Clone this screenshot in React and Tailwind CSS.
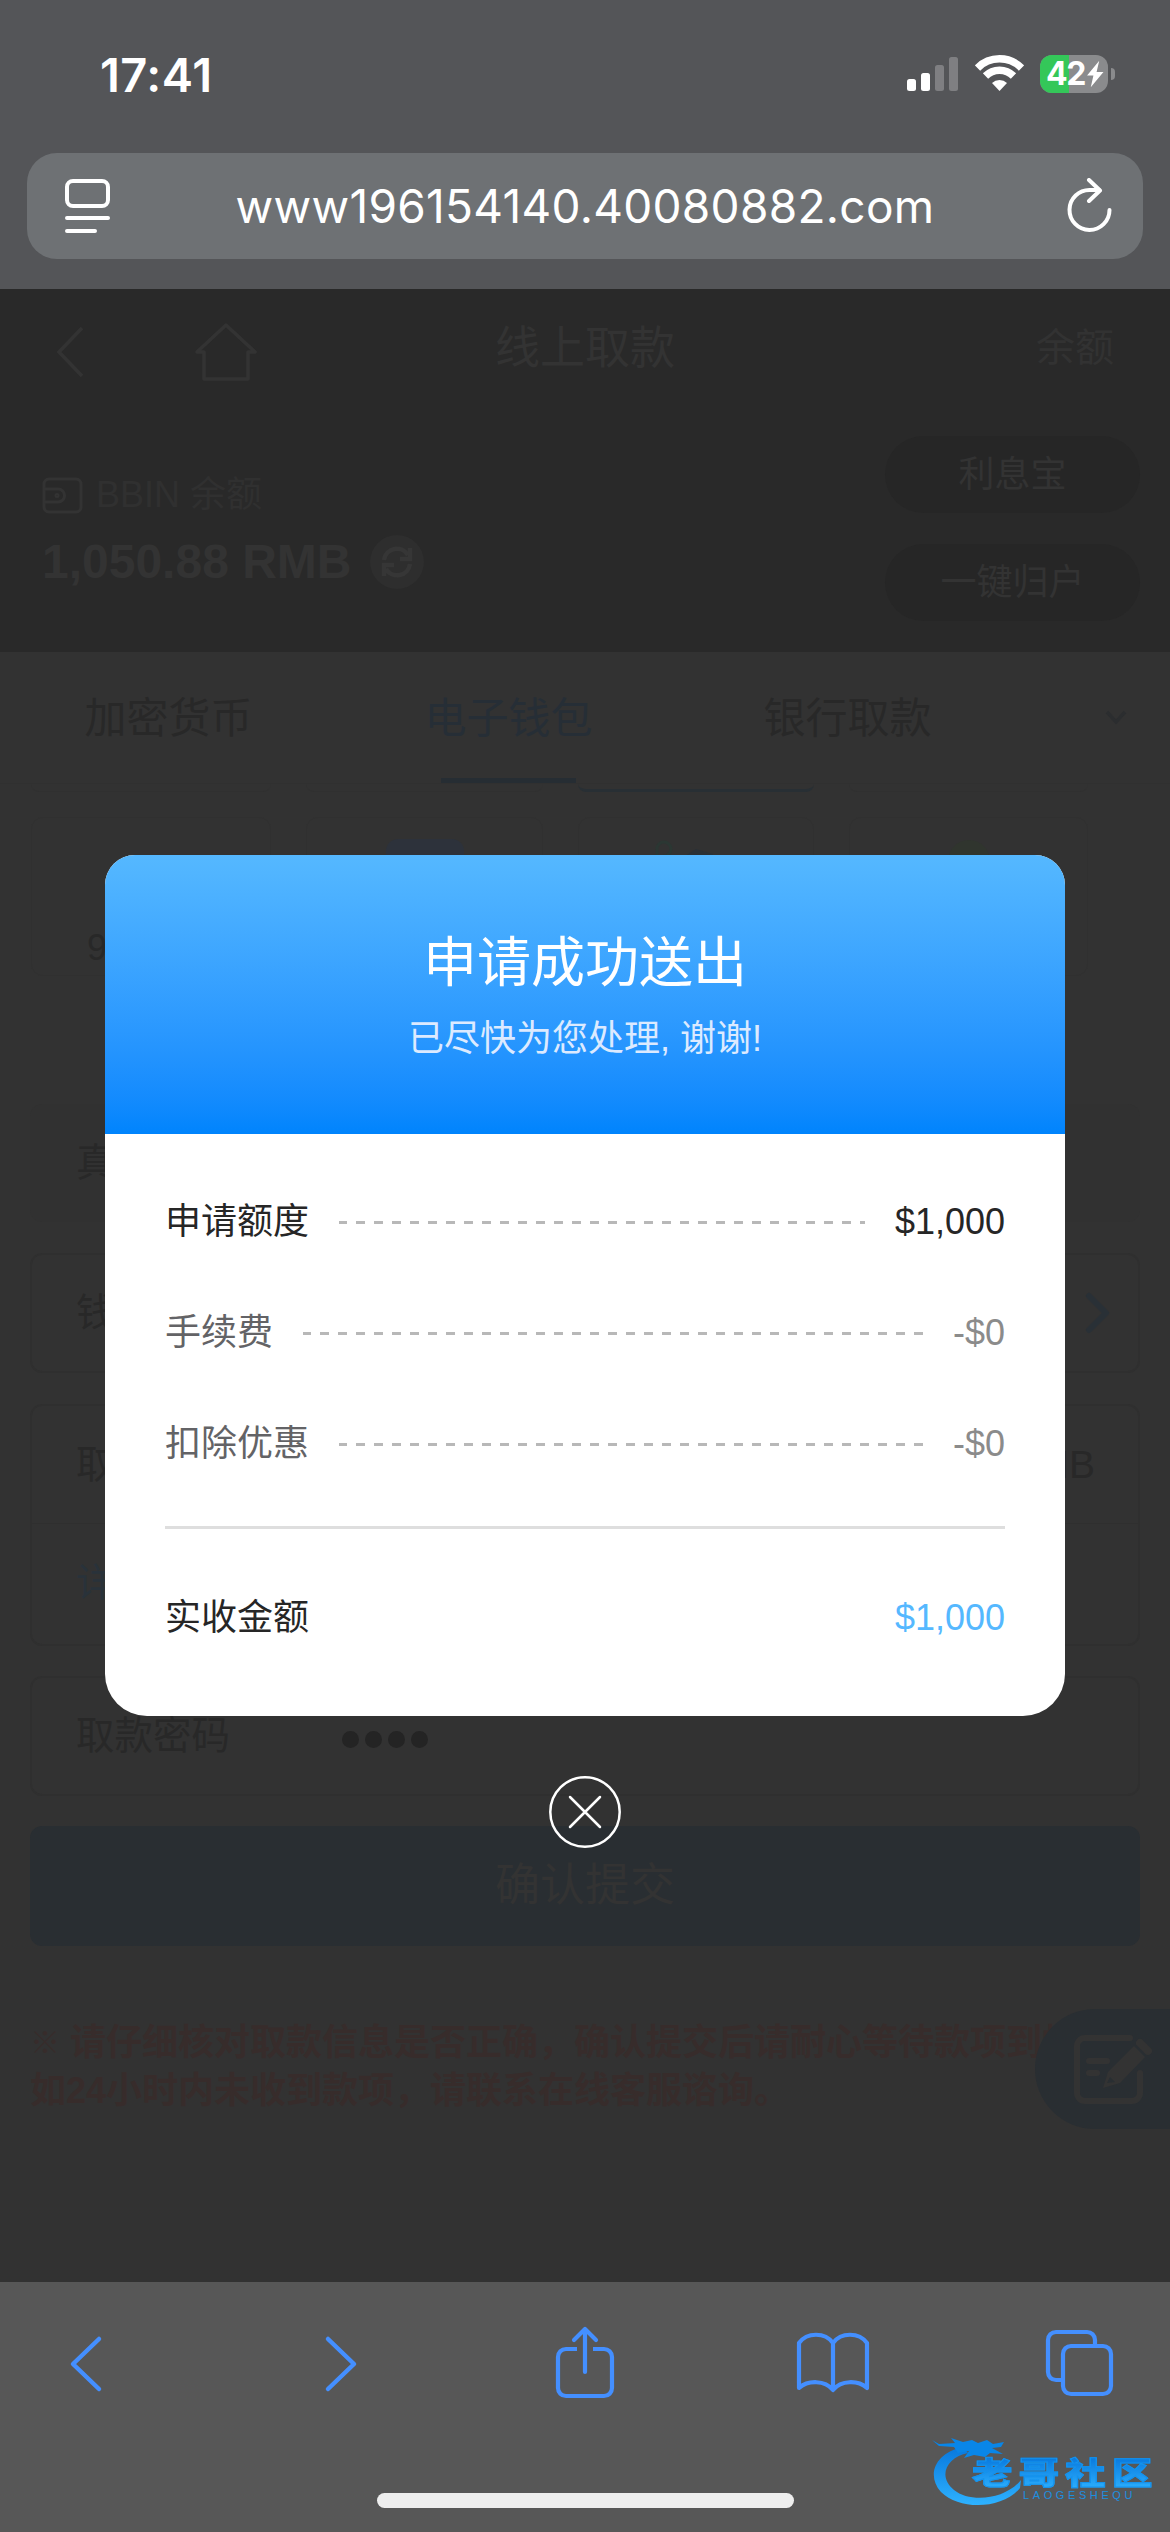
import React from 'react';

const summaryRows = [
  { label: '申请额度', value: '$1,000', labelClass: 'text-[#262626]', valueClass: 'text-[#262626]' },
  { label: '手续费', value: '-$0', labelClass: 'text-[#636366]', valueClass: 'text-[#8b8b8b]' },
  { label: '扣除优惠', value: '-$0', labelClass: 'text-[#636366]', valueClass: 'text-[#8b8b8b]' },
];

const StatusBar = () => (
  <div className="flex h-[153px] items-start justify-between pl-[100px] pr-[55px] pt-[52px] text-white">
    <div className="font-[Inter] text-[47px] font-semibold leading-[46px] tracking-[0.5px]">17:41</div>
    <div className="flex items-start pt-[3px]">
      <svg width="52" height="38" viewBox="0 0 52 38" fill="#fff">
        <rect x="0" y="24" width="9" height="12" rx="2.5" />
        <rect x="14" y="18" width="9" height="18" rx="2.5" />
        <rect x="28" y="10" width="9" height="26" rx="2.5" opacity=".25" />
        <rect x="42" y="2" width="9" height="34" rx="2.5" opacity=".25" />
      </svg>
      <svg className="ml-4" width="49" height="36" viewBox="0 0 49 36" fill="none" stroke="#fff">
        <path d="M2.500 13 a31 31 0 0 1 44 0" strokeWidth="7.500" />
        <path d="M10.500 21 a19.800 19.800 0 0 1 28 0" strokeWidth="7.500" />
        <path d="M24.500 36 l-7.500-8 a11 11 0 0 1 15 0z" fill="#fff" stroke="none" />
      </svg>
      <div className="relative ml-4 flex h-[38px] w-[68px] items-center overflow-hidden rounded-[12px] bg-[#8a8b8d]">
        <div className="h-full w-[29px] bg-[#34c759]" />
        <div className="absolute inset-0 flex items-center pl-[6px] font-[Inter] text-[32px] font-bold leading-none tracking-[-1.5px]">
          42
          <svg className="ml-px" width="18" height="28" viewBox="0 0 17 25" fill="#fff">
            <path d="M12.500 0 L1 14 h6 L4.500 25 L16.500 10.500 h-6.500 z" />
          </svg>
        </div>
      </div>
      <div className="ml-[3px] mt-[13px] h-[12px] w-[4px] rounded-r-full bg-[#8a8b8d]" />
    </div>
  </div>
);

const AddressBar = () => (
  <div className="mx-[27px] flex h-[106px] items-center rounded-[30px] bg-[#6e7174] pl-[37px] pr-[30px]">
    <svg width="46" height="56" viewBox="0 0 46 56" fill="none" stroke="#fff" strokeWidth="4" strokeLinecap="round">
      <rect x="3" y="3" width="41" height="25" rx="6" />
      <path d="M3 40h41M3 53h28" />
    </svg>
    <div className="flex-1 whitespace-nowrap pr-[7px] text-center font-[Inter] text-[46px] leading-[60px] tracking-[0.3px] text-white">www196154140.40080882.com</div>
    <svg width="46" height="56" viewBox="0 0 46 56" fill="none" stroke="#fff" strokeWidth="4" strokeLinecap="round" strokeLinejoin="round">
      <path d="M42.500 32 A20 20 0 1 1 23 12 h9" />
      <path d="M22 2 L33 12.500 L22 23" />
    </svg>
  </div>
);

const PageHeader = () => (
  <div className="flex h-[117px] items-start justify-between px-[56px]">
    <div className="flex w-[240px] items-start pt-[33px]">
      <svg className="mt-[5px]" width="28" height="50" viewBox="0 0 28 50" fill="none" stroke="#333" strokeWidth="3.500">
        <path d="M26 1 L3 25 L26 49" />
      </svg>
      <svg className="ml-[111px]" width="62" height="60" viewBox="0 0 62 60" fill="none" stroke="#333" strokeWidth="3.500" strokeLinejoin="round">
        <path d="M2 30 L31 3 L60 30 H53 V57 H9 V30 Z" />
      </svg>
    </div>
    <div className="pt-[28px] text-[45px] leading-[64px] text-[#333]">线上取款</div>
    <div className="w-[240px] pt-[27px] text-right text-[39px] leading-[64px] text-[#323232]">余额</div>
  </div>
);

const Balance = () => (
  <div className="flex h-[246px] justify-between pl-[42px] pr-[30px]">
    <div className="pt-[64px]">
      <div className="flex h-[50px] items-center text-[36px] text-[#303030]">
        <svg className="mr-[13px]" width="41" height="37" viewBox="0 0 41 37" fill="none" stroke="#333" strokeWidth="3">
          <rect x="2" y="2" width="37" height="33" rx="5" />
          <path d="M2 12h14a6.500 6.500 0 0 1 0 13H2" />
          <circle cx="15" cy="18.500" r="1" />
        </svg>
        BBIN 余额
      </div>
      <div className="mt-[15px] flex h-[54px] items-center text-[48px] font-bold text-[#333]">
        1,050.88 RMB
        <div className="ml-[18px] flex size-[54px] items-center justify-center rounded-full bg-[#2e2e2e]">
          <svg width="32" height="32" viewBox="0 0 32 32" fill="none" stroke="#363636" strokeWidth="4.500">
            <path d="M3 14 A13 13 0 0 1 27 9 M29 2 v11 h-10" />
            <path d="M29 18 A13 13 0 0 1 5 23 M3 30 v-11 h10" />
          </svg>
        </div>
      </div>
    </div>
    <div className="flex w-[255px] flex-col gap-[31px] pt-[30px] text-center text-[36px] leading-[78px] text-[#333]">
      <div className="h-[77px] rounded-full bg-[#262626]">利息宝</div>
      <div className="h-[77px] rounded-full bg-[#262626]">一键归户</div>
    </div>
  </div>
);

const Tabs = () => (
  <div className="flex h-[132px] border-b border-[#303030] text-center text-[42px] leading-[133px] text-[#282828]">
    <div className="w-[337px]">加密货币</div>
    <div className="flex w-[343px] flex-col items-center text-[#262e36]">
      <div className="h-[126px]">电子钱包</div>
      <div className="h-[6px] w-[135px] bg-[#262d33]" />
    </div>
    <div className="w-[335px]">银行取款</div>
    <div className="ml-[47px] flex w-[108px] items-center justify-center">
      <svg width="22" height="16" viewBox="0 0 22 16" fill="none" stroke="#2b2d2f" strokeWidth="3.500">
        <path d="M2 2 L11 12 L20 2" />
      </svg>
    </div>
  </div>
);

const WalletGrid = () => (
  <div className="h-[320px] px-[31px] text-[36px] text-[#282828]">
    <div className="grid h-[8px] grid-cols-[240px_237px_236px_239px] gap-x-[35px]">
      <div className="rounded-b-lg border-b border-[#303030]" />
      <div className="rounded-b-lg border-b border-[#303030]" />
      <div className="rounded-b-lg border-b-3 border-[#282f34]" />
      <div className="rounded-b-lg border-b border-[#303030]" />
    </div>
    <div className="mt-[25px] grid h-[132px] grid-cols-[240px_237px_236px_239px] gap-x-[35px]">
      <div className="rounded-xl border border-[#303030] pl-[55px] pt-[103px] leading-[54px]">988</div>
      <div className="flex justify-center rounded-xl border border-[#303030] pt-[21px]">
        <div className="h-[60px] w-[78px] rounded-xl bg-[#2d323b]" />
      </div>
      <div className="flex justify-center rounded-xl border border-[#303030] pr-[26px] pt-[22px]">
        <svg width="64" height="40" viewBox="0 0 64 40" fill="none">
          <path d="M6 24 V10 a7 7 0 1 1 6 6" stroke="#2b3733" strokeWidth="3" />
          <path d="M34 16 L45 9 L62 14 V40 H34z" fill="#2a3136" />
        </svg>
      </div>
      <div className="flex justify-center rounded-xl border border-[#303030] pt-[22px]">
        <div className="size-[42px] rounded-full bg-[#30352e]" />
      </div>
    </div>
  </div>
);

const WithdrawForm = () => (
  <div className="px-[30px] text-[39px] text-[#282828]">
    <div className="h-[118px] rounded-xl bg-[#313131] px-[46px] leading-[118px]">真实</div>
    <div className="mt-[31px] flex h-[120px] items-center justify-between rounded-xl border-2 border-[#2f2f2f] pl-[44px] pr-[27px]">
      钱包
      <svg width="26" height="42" viewBox="0 0 26 42" fill="none" stroke="#293036" strokeWidth="6" strokeLinecap="round" strokeLinejoin="round">
        <path d="M4 4 L21 21 L4 38" />
      </svg>
    </div>
    <div className="mt-[31px] h-[242px] rounded-xl border-2 border-[#2f2f2f] leading-[117px]">
      <div className="flex h-[118px] justify-between border-b border-[#2f2f2f] pl-[44px] pr-[43px]">
        <span>取款</span>
        <span>RMB</span>
      </div>
      <div className="pl-[44px] text-[#29323a]">详情</div>
    </div>
    <div className="mt-[30px] flex h-[120px] items-center rounded-xl border-2 border-[#2f2f2f] pl-[44px]">
      <span className="w-[266px] text-[38.500px]">取款密码</span>
      <div className="mt-[6px] flex gap-[6px]">
        {[0, 1, 2, 3].map(i => (
          <div key={i} className="size-[17px] rounded-full bg-[#242424]" />
        ))}
      </div>
    </div>
    <div className="mt-[30px] h-[120px] rounded-xl bg-[#292e32] text-center text-[45px] leading-[120px] text-[#333]">确认提交</div>
  </div>
);

const SuccessDialog = () => (
  <div className="absolute left-[105px] top-[855px] flex w-[960px] flex-col items-center">
    <div className="h-[861px] w-full overflow-hidden rounded-t-[30px] rounded-b-[42px] bg-white">
      <div className="h-[279px] bg-linear-to-b from-[#55b8ff] to-[#0084fd] pt-[73px] text-center">
        <div className="text-[54px] leading-[70px] text-white">申请成功送出</div>
        <div className="mt-[14px] text-[36px] leading-[54px] text-[#dceaff]">已尽快为您处理, 谢谢!</div>
      </div>
      <div className="px-[60px] pt-[32px] text-[36px]">
        {summaryRows.map(row => (
          <div key={row.label} className="flex h-[111px] items-center gap-[30px]">
            <span className={row.labelClass}>{row.label}</span>
            <div className="mt-[2px] h-[3px] flex-1 bg-[repeating-linear-gradient(90deg,#b8b8b8_0_8px,transparent_8px_17px,#b8b8b8_17px_18px)]" />
            <span className={row.valueClass}>{row.value}</span>
          </div>
        ))}
        <div className="mt-[27px] h-[3px] bg-[#dedede]" />
        <div className="flex h-[177px] items-center justify-between text-[#262626]">
          <span>实收金额</span>
          <span className="text-[#55b8ff]">$1,000</span>
        </div>
      </div>
    </div>
    <svg className="mt-[60px]" width="72" height="72" viewBox="0 0 72 72" fill="none" stroke="#fff" strokeWidth="2.500" strokeLinecap="round">
      <circle cx="36" cy="36" r="34.700" />
      <path d="M21 21 L51 51 M51 21 L21 51" />
    </svg>
  </div>
);

const BrowserToolbar = () => (
  <div className="flex h-[250px] flex-col items-center bg-[#575757]">
    <div className="flex h-[156px] w-full items-center pl-[68px] pt-[6px]">
      <svg className="mt-[2px]" width="35" height="58" viewBox="0 0 35 58" fill="none" stroke="#448fff" strokeWidth="4.500" strokeLinecap="round" strokeLinejoin="round">
        <path d="M31 4 L5 29 L31 54" />
      </svg>
      <svg className="ml-[221px] mt-[2px]" width="35" height="58" viewBox="0 0 35 58" fill="none" stroke="#448fff" strokeWidth="4.500" strokeLinecap="round" strokeLinejoin="round">
        <path d="M4 4 L30 29 L4 54" />
      </svg>
      <svg className="ml-[196px]" width="60" height="74" viewBox="0 0 60 74" fill="none" stroke="#448fff" strokeWidth="4.200" strokeLinecap="round" strokeLinejoin="round">
        <path d="M22 23 H11 a8 8 0 0 0 -8 8 V62 a8 8 0 0 0 8 8 H49 a8 8 0 0 0 8 -8 V31 a8 8 0 0 0 -8 -8 H38" strokeLinecap="butt" />
        <path d="M30 46 V4 M19 14 L30 3 L41 14" />
      </svg>
      <svg className="ml-[181px]" width="74" height="64" viewBox="0 0 74 64" fill="none" stroke="#448fff" strokeWidth="4.200" strokeLinecap="round" strokeLinejoin="round">
        <path d="M37 12 C29 1 11 1 3 12 V57 C12 49 29 49 37 59 C45 49 62 49 71 57 V12 C63 1 45 1 37 12 Z V59" />
      </svg>
      <svg className="ml-[175px]" width="70" height="70" viewBox="0 0 70 70" fill="none" stroke="#448fff" strokeWidth="4.200">
        <rect x="18" y="18" width="48" height="48" rx="8" />
        <path d="M16 52 H11 a8 8 0 0 1 -8 -8 V12 a8 8 0 0 1 8 -8 H42 a8 8 0 0 1 8 8 V18" />
      </svg>
    </div>
    <div className="mt-[55px] h-[15px] w-[417px] rounded-full bg-[#eee]" />
  </div>
);

const CommunityMark = () => (
  <div className="absolute left-[930px] top-[2430px] h-[80px] w-[230px]">
    <svg width="230" height="80" viewBox="0 0 230 80">
      <defs>
        <linearGradient id="mark" x1="0" y1="0" x2="0" y2="1">
          <stop offset="0" stopColor="#0878dd" />
          <stop offset="1" stopColor="#2eb2ff" />
        </linearGradient>
      </defs>
      <path d="M33 17 C5 23 -4 45 11 62 C30 81 73 79 90 58 L91 50 C75 70 40 73 24 60 C7 46 17 27 38 23 Z" fill="url(#mark)" />
      <path d="M2 10 L9 14 L25 13 L21 8 L33 12 L42 10 L48 13 L57 10 L63 14 L74 12 L71 17 L62 18 L73 24 L60 23 L55 27 L44 25 L34 28 L39 21 L28 23 L24 17 L9 16 Z" fill="#0986e8" />
    </svg>
    <div className="absolute left-[42px] top-[27px] origin-left scale-x-130 whitespace-nowrap bg-linear-to-b from-[#0878dd] to-[#2eb2ff] bg-clip-text text-[31px] font-black leading-[34px] tracking-[4.900px] text-transparent [-webkit-text-stroke:1px_#1493ee]">老哥社区</div>
    <div className="absolute left-[93px] top-[60px] text-[11px] leading-[11px] tracking-[3.600px] text-[#1c8fe0]">LAOGESHEQU</div>
  </div>
);

const App = () => {
  return (
    <div className="relative h-[2532px] w-[1170px] overflow-hidden bg-[#323232] font-['Liberation_Sans','Noto_Sans_CJK_SC',sans-serif]">
      <div className="h-[289px] bg-[#545558]">
        <StatusBar />
        <AddressBar />
      </div>

      {/* Withdraw page */}
      <div className="h-[1993px]">
        <div className="h-[363px] bg-[#292929]">
          <PageHeader />
          <Balance />
        </div>
        <Tabs />
        <WalletGrid />
        <WithdrawForm />
        <div className="whitespace-nowrap pl-[30px] pt-[73px] text-[36px] font-bold leading-[48px] text-[#372c2b]">
          <div className="flex">
            <span className="w-[40px] text-[30px]">※</span>
            请仔细核对取款信息是否正确，确认提交后请耐心等待款项到帐
          </div>
          <div>如24小时内未收到款项，请联系在线客服谘询。</div>
        </div>
      </div>

      <BrowserToolbar />

      {/* Feedback button */}
      <div className="absolute left-[1035px] top-[2009px] flex h-[120px] w-[135px] items-center rounded-l-full bg-[#292e32] pl-[38px]">
        <svg width="82" height="72" viewBox="0 0 82 72" fill="none" stroke="#333" strokeWidth="6" strokeLinecap="round" strokeLinejoin="round">
          <path d="M57 5 H12 a8 8 0 0 0 -8 8 V60 a8 8 0 0 0 8 8 H59 a8 8 0 0 0 8 -8 V40" />
          <path d="M16 28h18M16 40h8" />
          <path d="M30 55 L35 39 L61 13 L72 24 L47 50 Z" fill="#333" stroke="none" />
          <path d="M67 10 L75 18" strokeWidth="8" />
          <path d="M34 50 l3-6 l5 5z" fill="#292e32" stroke="none" />
        </svg>
      </div>

      <SuccessDialog />
      <CommunityMark />
    </div>
  );
};

export default App;
